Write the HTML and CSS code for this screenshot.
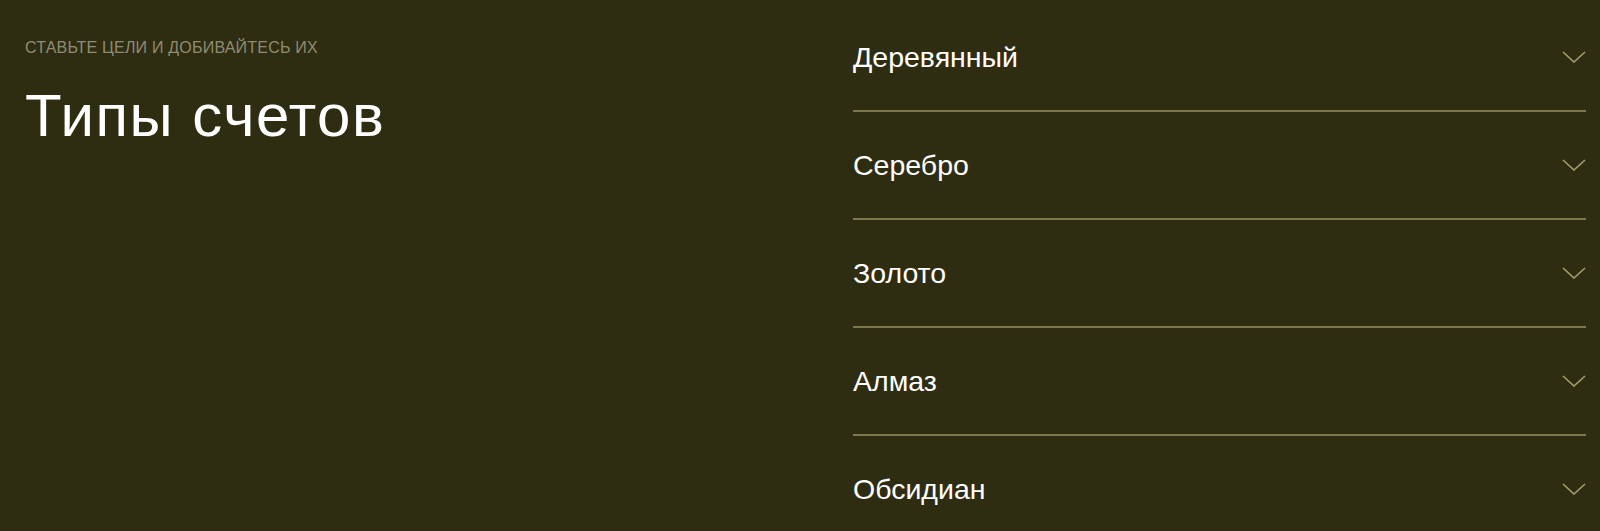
FILE: index.html
```html
<!DOCTYPE html>
<html lang="ru">
<head>
  <meta charset="UTF-8" />
  <meta name="viewport" content="width=device-width, initial-scale=1.0"/>
  <title>Типы счетов</title>
  <link rel="stylesheet" href="styles.css">
</head>
<body>
  <section class="accounts">
    <div class="intro">
      <span class="eyebrow">Ставьте цели и добивайтесь их</span>
      <h2>Типы счетов</h2>
    </div>

    <ul class="accordion">
      <li class="item">
        <span>Деревянный</span>
        <svg class="chevron" viewBox="0 0 24 12"><path d="M1 1l11 10L23 1"/></svg>
      </li>
      <li class="item">
        <span>Серебро</span>
        <svg class="chevron" viewBox="0 0 24 12"><path d="M1 1l11 10L23 1"/></svg>
      </li>
      <li class="item">
        <span>Золото</span>
        <svg class="chevron" viewBox="0 0 24 12"><path d="M1 1l11 10L23 1"/></svg>
      </li>
      <li class="item">
        <span>Алмаз</span>
        <svg class="chevron" viewBox="0 0 24 12"><path d="M1 1l11 10L23 1"/></svg>
      </li>
      <li class="item">
        <span>Обсидиан</span>
        <svg class="chevron" viewBox="0 0 24 12"><path d="M1 1l11 10L23 1"/></svg>
      </li>
    </ul>
  </section>
</body>
</html>
```

FILE: styles.css
```css
body {
  margin: 0;
  padding: 0;
  background-color: #2e2d11;
  font-family: 'Liberation Sans', Arial, sans-serif;
  color: #fff;
  overflow: hidden;
}

.accounts {
  display: grid;
  grid-template-columns: 1fr 733px;
  padding: 4px 14px 0 25px;
}

.intro {
  padding-top: 35px;
}

.eyebrow {
  display: block;
  font-size: 16px;
  letter-spacing: 0.2px;
  text-transform: uppercase;
  color: #8e8c74;
}

h2 {
  font-size: 60px;
  font-weight: 400;
  letter-spacing: 1.5px;
  margin: 29px 0 0;
  line-height: 1;
}

.accordion {
  list-style: none;
  margin: 0;
  padding: 0;
}

.item {
  height: 106px;
  display: flex;
  align-items: center;
  justify-content: space-between;
  border-bottom: 2px solid #7c774f;
  font-size: 28.5px;
  cursor: pointer;
}

.chevron {
  width: 24px;
  height: 12px;
  fill: none;
  stroke: #a69f6d;
  stroke-width: 1.6;
}
```
